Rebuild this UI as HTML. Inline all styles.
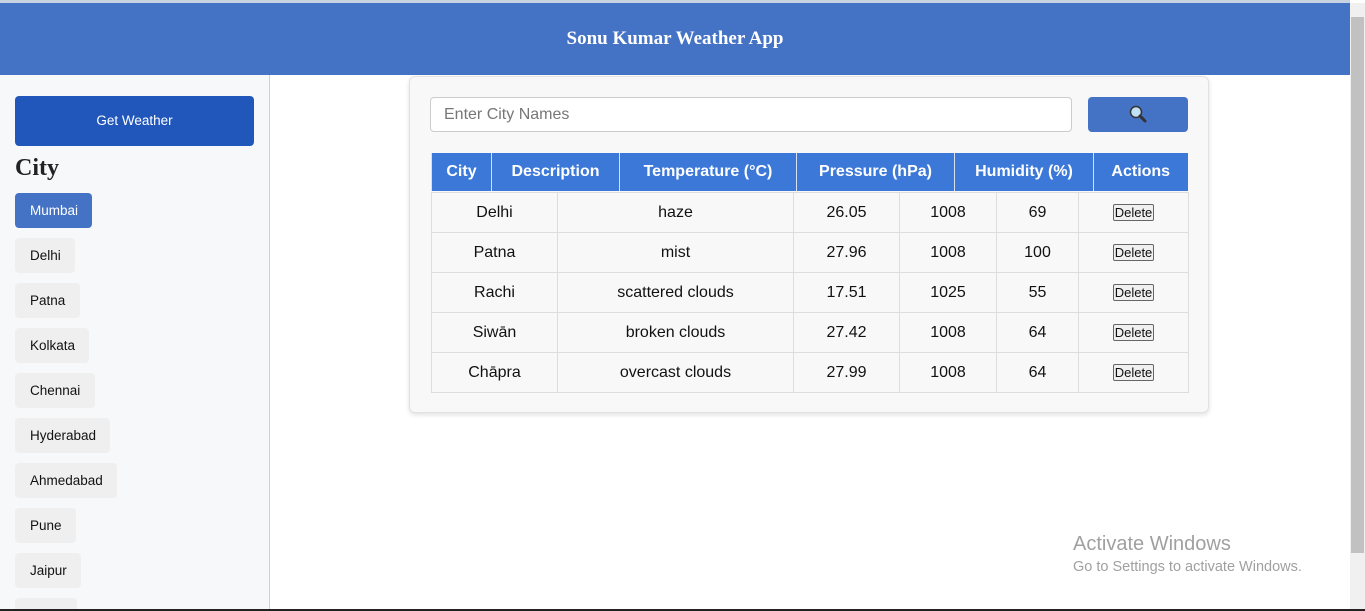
<!DOCTYPE html>
<html><head><style>
*{margin:0;padding:0;box-sizing:border-box}
body{width:1365px;height:611px;overflow:hidden;background:#fff;font-family:"Liberation Sans",Arial,sans-serif;position:relative}
.top{position:absolute;left:0;top:0;width:1350px;height:3px;background:#c7d3e0}
.hdr{position:absolute;left:0;top:3px;width:1350px;height:72px;background:#4472c4;color:#fff;font:bold 19px "Liberation Serif",serif;text-align:center;line-height:72px}
.side{position:absolute;left:0;top:75px;width:270px;height:534px;background:#f7f8fa;border-right:1px solid #d0d0d0;overflow:hidden}
.gw{position:absolute;left:15px;top:21px;width:239px;height:50px;background:#2157bb;border-radius:4px;color:#fff;font-size:13.5px;text-align:center;line-height:50px}
.city{position:absolute;left:15px;top:80px;font:bold 24px "Liberation Serif",serif;color:#222}
.cb{position:absolute;left:15px;height:35px;background:#efefef;border-radius:4px;font-size:13.5px;line-height:35px;padding-left:15px;color:#111}
.card{position:absolute;left:409px;top:76px;width:800px;height:337px;background:#f8f8f8;border:1px solid #e2e2e2;border-radius:6px;box-shadow:0 2px 5px rgba(0,0,0,.12)}
.inp{position:absolute;left:430px;top:97px;width:642px;height:35px;background:#fff;border:1px solid #ccc;border-radius:4px;font-size:16px;color:#777;line-height:33px;padding-left:13px}
.sb{position:absolute;left:1088px;top:97px;width:100px;height:35px;background:#4472c4;border-radius:4px}
table{position:absolute;border-collapse:collapse;table-layout:fixed}
.th{left:431px;top:153px;width:756px}
.th td{background:#3c78d8;color:#fff;font-weight:bold;font-size:16px;height:38px;text-align:center;border-left:1px solid #d6e0f0}
.tb{left:431px;top:192px;width:757px}
.tb td{height:40px;border:1px solid #ddd;text-align:center;font-size:16px;color:#111;background:#f8f8f8}
.del{display:inline-block;font-size:13px;border:1px solid #666;border-radius:2px;padding:0 1px;background:#f0f0f0;line-height:15px}
.scr{position:absolute;left:1350px;top:3px;width:15px;height:606px;background:#f0f0f0}
.thumb{position:absolute;left:1351px;top:17px;width:13px;height:536px;background:#c1c1c1}
.bot{position:absolute;left:0;top:609px;width:1365px;height:2px;background:#222}
.aw{position:absolute;left:1073px;top:533px;color:#a0a0a0;font-size:20px}
.aw2{position:absolute;left:1073px;top:559px;color:#a0a0a0;font-size:14.5px}
</style></head><body>
<div class="top"></div>
<div class="hdr">Sonu Kumar Weather App</div>
<div class="side">
<div class="gw">Get Weather</div>
<div class="city">City</div>
<div class="cb" style="top:118px;width:77px;background:#4472c4;color:#fff">Mumbai</div>
<div class="cb" style="top:163px;width:60px">Delhi</div>
<div class="cb" style="top:208px;width:65px">Patna</div>
<div class="cb" style="top:253px;width:74px">Kolkata</div>
<div class="cb" style="top:298px;width:80px">Chennai</div>
<div class="cb" style="top:343px;width:95px">Hyderabad</div>
<div class="cb" style="top:388px;width:102px">Ahmedabad</div>
<div class="cb" style="top:433px;width:61px">Pune</div>
<div class="cb" style="top:478px;width:66px">Jaipur</div>
<div class="cb" style="top:523px;width:62px"></div>
</div>
<div class="card"></div>
<div class="inp">Enter City Names</div>
<div class="sb"><svg width="100" height="35"><circle cx="48" cy="15" r="5.5" fill="#bfe0f7" stroke="#333" stroke-width="1.5"/><line x1="52" y1="19" x2="57" y2="24" stroke="#333" stroke-width="3" stroke-linecap="round"/></svg></div>
<table class="th"><colgroup><col style="width:60px"><col style="width:128px"><col style="width:177px"><col style="width:158px"><col style="width:139px"><col style="width:94px"></colgroup>
<tr><td>City</td><td>Description</td><td>Temperature (°C)</td><td>Pressure (hPa)</td><td>Humidity (%)</td><td>Actions</td></tr></table>
<table class="tb"><colgroup><col style="width:126px"><col style="width:236px"><col style="width:106px"><col style="width:97px"><col style="width:82px"><col style="width:110px"></colgroup>
<tr><td>Delhi</td><td>haze</td><td>26.05</td><td>1008</td><td>69</td><td><span class="del">Delete</span></td></tr>
<tr><td>Patna</td><td>mist</td><td>27.96</td><td>1008</td><td>100</td><td><span class="del">Delete</span></td></tr>
<tr><td>Rachi</td><td>scattered clouds</td><td>17.51</td><td>1025</td><td>55</td><td><span class="del">Delete</span></td></tr>
<tr><td>Siwān</td><td>broken clouds</td><td>27.42</td><td>1008</td><td>64</td><td><span class="del">Delete</span></td></tr>
<tr><td>Chāpra</td><td>overcast clouds</td><td>27.99</td><td>1008</td><td>64</td><td><span class="del">Delete</span></td></tr>
</table>
<div class="aw">Activate Windows</div>
<div class="aw2">Go to Settings to activate Windows.</div>
<div class="scr"></div><div class="thumb"></div>
<div class="bot"></div>
</body></html>
